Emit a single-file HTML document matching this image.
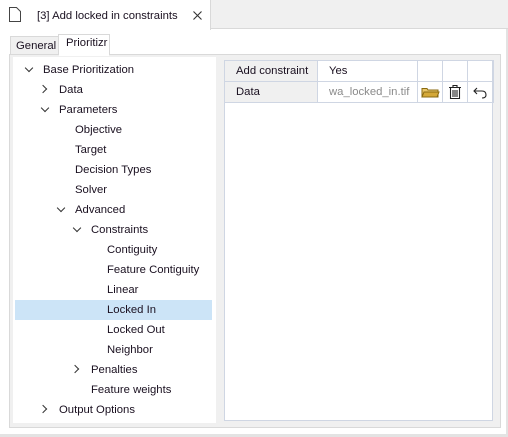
<!DOCTYPE html>
<html><head><style>
*{margin:0;padding:0;box-sizing:border-box}
body{width:508px;height:437px;background:#fff;font-family:"Liberation Sans",sans-serif;font-size:11.3px;color:#1a1020;position:relative;overflow:hidden}
.abs{position:absolute}
.t{position:absolute;height:20px;line-height:20px;white-space:nowrap}
.chev{position:absolute;width:6px;height:6px;border-right:1.2px solid #333;border-bottom:1.2px solid #333}
.d{transform:rotate(45deg)}
.r{transform:rotate(-45deg)}
table{table-layout:fixed}
td{border:1px solid #cfd6e3;height:21px;padding:0 0 0 11px;font-size:11.3px;white-space:nowrap;overflow:hidden}
</style></head><body>
<div class="abs" style="left:0;top:0;width:508px;height:29px;background:#f0f0f0;border-bottom:1px solid #d9d9d9"></div>
<div class="abs" style="left:0;top:0;width:211px;height:30px;background:#fff;border-right:1px solid #d9d9d9"></div>
<svg class="abs" style="left:9px;top:7px" width="12" height="15"><path d="M0.5 0.5H7.5L11.5 4.5V14.5H0.5Z" fill="#fff" stroke="#444"/></svg>
<div class="t" style="left:37px;top:6px">[3] Add locked in constraints</div>
<svg class="abs" style="left:193px;top:11px" width="9" height="9"><path d="M0.5 0.5L8.5 8.5M8.5 0.5L0.5 8.5" stroke="#333" stroke-width="1.1"/></svg>
<div class="abs" style="left:506px;top:29px;width:2px;height:408px;background:#e3e3e3"></div>
<div class="abs" style="left:0;top:434px;width:508px;height:3px;background:#e3e3e3"></div>
<!-- subtabs -->
<div class="abs" style="left:10px;top:36px;width:49px;height:19px;background:#f0f0f0;border:1px solid #d9d9d9"></div>
<div class="t" style="left:16px;top:36px">General</div>
<div class="abs" style="left:58px;top:34px;width:52px;height:22px;background:#fff;border:1px solid #d9d9d9;border-bottom:none"></div>
<div class="t" style="left:66px;top:33px">Prioritizr</div>
<div class="abs" style="left:9px;top:54px;width:492px;height:374px;border:1px solid #d9d9d9;background:#f0f0f0"></div>
<div class="abs" style="left:59px;top:54px;width:50px;height:2px;background:#fff"></div>
<div class="abs" style="left:13px;top:57px;width:203px;height:366px;background:#fff"></div>
<div class="abs" style="left:224px;top:60px;width:269px;height:361px;background:#fff;border:1px solid #cfd6e3"></div>
<table class="abs" style="left:224px;top:60px;border-collapse:collapse;width:269px">
<tr><td style="width:93px;background:#f0f0f0">Add constraint</td><td style="width:100px">Yes</td><td style="width:25px"></td><td style="width:25px"></td><td style="width:26px"></td></tr>
<tr><td style="background:#f0f0f0">Data</td><td style="color:#8a8a8a">wa_locked_in.tif</td>
<td style="padding:0"><svg width="24" height="20" style="display:block"><path d="M4 6.5H9L10 8H20V15H4Z" fill="#e8c66a" stroke="#8a6a10"/><path d="M4 15L6 10H21L19 15Z" fill="#d4a838" stroke="#8a6a10"/></svg></td>
<td style="padding:0"><svg width="24" height="20" style="display:block"><path d="M6 5.5H18M10 5.5V3.5H14V5.5M7.5 6V16.5H16.5V6M10 8V15M12 8V15M14 8V15" fill="none" stroke="#222" stroke-width="1.1"/></svg></td>
<td style="padding:0"><svg width="24" height="20" style="display:block"><path d="M9 6L6 9L9 12M6 9H14Q18 9 18 13Q18 16 14 16" fill="none" stroke="#222" stroke-width="1.1"/></svg></td></tr>
</table>
<!-- tree -->
<div class="abs" style="left:15px;top:300px;width:197px;height:20px;background:#cce4f7"></div>
<div class="chev d" style="left:26px;top:65px"></div><div class="t" style="left:43px;top:60px">Base Prioritization</div>
<div class="chev r" style="left:40px;top:86px"></div><div class="t" style="left:59px;top:80px">Data</div>
<div class="chev d" style="left:42px;top:105px"></div><div class="t" style="left:59px;top:100px">Parameters</div>
<div class="t" style="left:75px;top:120px">Objective</div>
<div class="t" style="left:75px;top:140px">Target</div>
<div class="t" style="left:75px;top:160px">Decision Types</div>
<div class="t" style="left:75px;top:180px">Solver</div>
<div class="chev d" style="left:58px;top:205px"></div><div class="t" style="left:75px;top:200px">Advanced</div>
<div class="chev d" style="left:74px;top:225px"></div><div class="t" style="left:91px;top:220px">Constraints</div>
<div class="t" style="left:107px;top:240px">Contiguity</div>
<div class="t" style="left:107px;top:260px">Feature Contiguity</div>
<div class="t" style="left:107px;top:280px">Linear</div>
<div class="t" style="left:107px;top:300px">Locked In</div>
<div class="t" style="left:107px;top:320px">Locked Out</div>
<div class="t" style="left:107px;top:340px">Neighbor</div>
<div class="chev r" style="left:72px;top:366px"></div><div class="t" style="left:91px;top:360px">Penalties</div>
<div class="t" style="left:91px;top:380px">Feature weights</div>
<div class="chev r" style="left:40px;top:406px"></div><div class="t" style="left:59px;top:400px">Output Options</div>
</body></html>
